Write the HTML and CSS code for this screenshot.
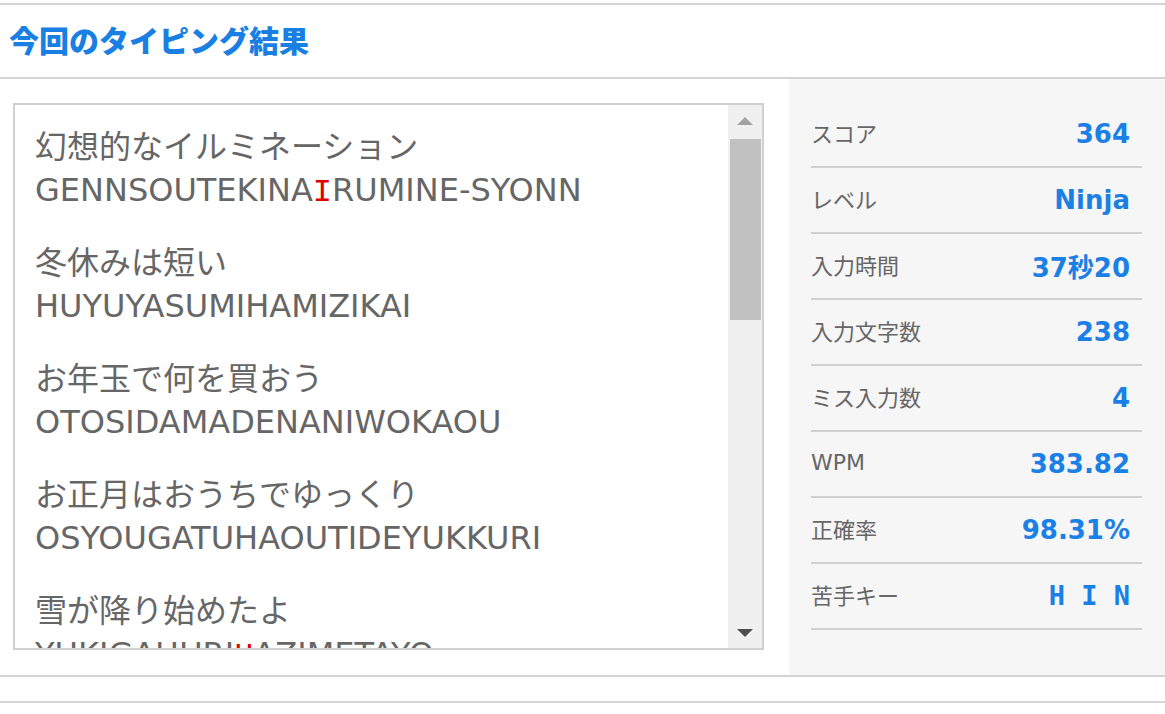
FILE: index.html
```html
<!DOCTYPE html>
<html lang="ja">
<head>
<meta charset="utf-8">
<title>今回のタイピング結果</title>
<link rel="stylesheet" href="styles.css">
</head>
<body>
<section class="result">
  <h2 class="result-title">今回のタイピング結果</h2>
  <div class="result-body">
    <div class="history-col">
      <div class="history-box">
        <div class="history-list">
          <div class="entry">
            <div class="jp">幻想的なイルミネーション</div>
            <div class="roma">GENNSOUTEKINA<span class="miss">I</span>RUMINE-SYONN</div>
          </div>
          <div class="entry">
            <div class="jp">冬休みは短い</div>
            <div class="roma">HUYUYASUMIHAMIZIKAI</div>
          </div>
          <div class="entry">
            <div class="jp">お年玉で何を買おう</div>
            <div class="roma">OTOSIDAMADENANIWOKAOU</div>
          </div>
          <div class="entry">
            <div class="jp">お正月はおうちでゆっくり</div>
            <div class="roma">OSYOUGATUHAOUTIDEYUKKURI</div>
          </div>
          <div class="entry">
            <div class="jp">雪が降り始めたよ</div>
            <div class="roma">YUKIGAHURI<span class="miss">H</span>AZIMETAYO</div>
          </div>
        </div>
        <div class="scrollbar">
          <div class="sb-btn"><span class="arrow-up"></span></div>
          <div class="sb-track"><div class="sb-thumb"></div></div>
          <div class="sb-btn"><span class="arrow-down"></span></div>
        </div>
      </div>
    </div>
    <div class="stats">
      <div class="stat"><span class="label">スコア</span><span class="value">364</span></div>
      <div class="stat"><span class="label">レベル</span><span class="value">Ninja</span></div>
      <div class="stat"><span class="label">入力時間</span><span class="value">37秒20</span></div>
      <div class="stat"><span class="label">入力文字数</span><span class="value">238</span></div>
      <div class="stat"><span class="label">ミス入力数</span><span class="value">4</span></div>
      <div class="stat"><span class="label">WPM</span><span class="value">383.82</span></div>
      <div class="stat"><span class="label">正確率</span><span class="value">98.31%</span></div>
      <div class="stat"><span class="label">苦手キー</span><span class="value mono">H I N</span></div>
    </div>
  </div>
</section>
<div class="next-section"></div>
</body>
</html>
```

FILE: styles.css
```css
html, body {
  margin: 0;
  padding: 0;
  background: #fff;
}
body {
  font-family: "DejaVu Sans", "Noto Sans CJK JP", sans-serif;
  color: #666;
  padding-top: 3px;
}
.result {
  border-top: 2px solid #d4d4d4;
  border-bottom: 2px solid #d4d4d4;
}
.result-title {
  margin: 0;
  height: 74px;
  box-sizing: border-box;
  display: flex;
  align-items: center;
  padding: 0 0 4px 9px;
  font-family: "Noto Sans CJK JP", sans-serif;
  font-size: 30px;
  font-weight: 900;
  color: #1a7fe3;
  border-bottom: 2px solid #d4d4d4;
}
.result-body {
  display: flex;
  height: 596px;
}
.history-col {
  width: 789px;
  box-sizing: border-box;
  padding: 24px 25px 25px 13px;
}
.history-box {
  height: 547px;
  box-sizing: border-box;
  border: 2px solid #d0d0d0;
  display: flex;
  background: #fff;
}
.history-list {
  flex: 1;
  overflow: hidden;
  padding: 16px 0 0 20px;
}
.entry {
  margin-bottom: 24px;
}
.jp {
  font-family: "Noto Sans CJK JP", sans-serif;
  font-size: 32px;
  line-height: 46px;
  height: 46px;
  white-space: nowrap;
}
.roma {
  font-size: 32px;
  line-height: 46px;
  height: 46px;
  white-space: nowrap;
}
.miss {
  color: #e00000;
  font-family: "Liberation Mono", monospace;
  line-height: 1;
}
.scrollbar {
  width: 34px;
  background: #f0f0f0;
  display: flex;
  flex-direction: column;
}
.sb-btn {
  height: 34px;
  display: flex;
  align-items: center;
  justify-content: center;
}
.sb-track {
  flex: 1;
  padding: 0 1px 0 2px;
}
.sb-thumb {
  height: 181px;
  background: #c1c1c1;
}
.arrow-up {
  width: 0;
  height: 0;
  border-left: 8px solid transparent;
  border-right: 8px solid transparent;
  border-bottom: 8px solid #a3a3a3;
  margin-top: -2px;
}
.arrow-down {
  width: 0;
  height: 0;
  border-left: 8px solid transparent;
  border-right: 8px solid transparent;
  border-top: 8px solid #505050;
  margin-top: 4px;
}
.stats {
  flex: 1;
  background: #f6f6f6;
  padding: 23px 23px 0 22px;
}
.stat {
  height: 66px;
  box-sizing: border-box;
  border-bottom: 2px solid #d0d0d0;
  display: flex;
  align-items: center;
  justify-content: space-between;
  padding: 0 12px 4px 0;
}
.label {
  font-family: "DejaVu Sans", "Noto Sans CJK JP", sans-serif;
  font-size: 22px;
  color: #666;
}
.value {
  font-family: "DejaVu Sans", "Noto Sans CJK JP", sans-serif;
  font-size: 26px;
  font-weight: 700;
  color: #1a80e5;
  margin-top: 3px;
}
.value.mono {
  font-family: "DejaVu Sans Mono", "Liberation Mono", monospace;
  font-size: 27px;
}
.next-section {
  margin-top: 24px;
  border-top: 2px solid #d4d4d4;
  height: 20px;
}
```
